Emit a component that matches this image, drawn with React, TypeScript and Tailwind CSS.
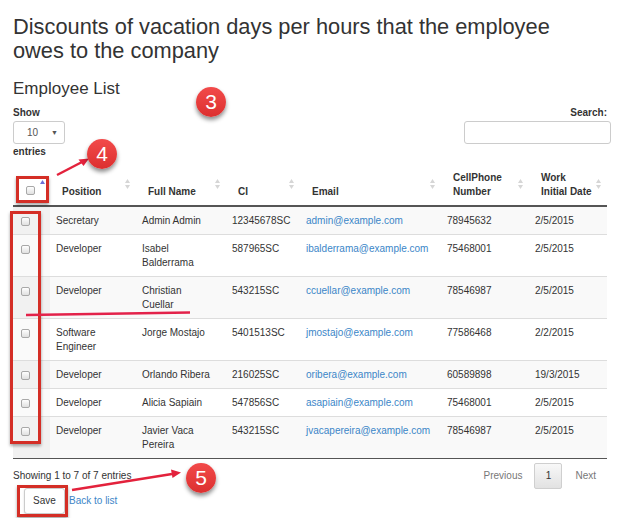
import React from 'react';

type Employee = { position: string; name: string; ci: string; email: string; phone: string; date: string };

const employees: Employee[] = [
  { position: 'Secretary', name: 'Admin Admin', ci: '12345678SC', email: 'admin@example.com', phone: '78945632', date: '2/5/2015' },
  { position: 'Developer', name: 'Isabel Balderrama', ci: '587965SC', email: 'ibalderrama@example.com', phone: '75468001', date: '2/5/2015' },
  { position: 'Developer', name: 'Christian Cuellar', ci: '543215SC', email: 'ccuellar@example.com', phone: '78546987', date: '2/5/2015' },
  { position: 'Software Engineer', name: 'Jorge Mostajo', ci: '5401513SC', email: 'jmostajo@example.com', phone: '77586468', date: '2/2/2015' },
  { position: 'Developer', name: 'Orlando Ribera', ci: '216025SC', email: 'oribera@example.com', phone: '60589898', date: '19/3/2015' },
  { position: 'Developer', name: 'Alicia Sapiain', ci: '547856SC', email: 'asapiain@example.com', phone: '75468001', date: '2/5/2015' },
  { position: 'Developer', name: 'Javier Vaca Pereira', ci: '543215SC', email: 'jvacapereira@example.com', phone: '78546987', date: '2/5/2015' },
];

const CheckBox = () => (
  <span className="block w-[9px] h-[9px] rounded-[2px] border border-[#a8a8a8] bg-linear-to-b from-white to-[#e0e0e0]" />
);

const SortBoth = () => (
  <svg width="5" height="10" viewBox="0 0 5 10" className="absolute right-[6px] top-[14px]">
    <path d="M2.5 0L5 4H0z" fill="#d6d6d6" />
    <path d="M2.5 10L0 6h5z" fill="#d6d6d6" />
  </svg>
);

const Badge = ({ n, className }: { n: number; className: string }) => (
  <div
    className={`absolute w-[30px] h-[30px] rounded-full bg-linear-to-b from-[#f24a4a] to-[#dc2f2f] text-white text-[21px] leading-[30px] text-center shadow-[0_3px_4px_rgba(0,0,0,0.45)] ${className}`}
  >
    {n}
  </div>
);

const headers = [
  { label: 'Position' },
  { label: 'Full Name' },
  { label: 'CI' },
  { label: 'Email' },
  { label: 'CellPhone Number' },
  { label: 'Work Initial Date' },
];

export default function App() {
  return (
    <div className="relative w-[624px] h-[518px] overflow-hidden bg-white text-[#333] font-['Liberation_Sans',Arial,sans-serif]">
      <div className="pl-[13px] pt-[15px] w-[607px]">
        <h2 className="text-[21.8px] leading-[24px] text-[#333]">
          Discounts of vacation days per hours that the employee
          <br />
          owes to the company
        </h2>
        <h4 className="mt-[16px] text-[17px] leading-[19px] text-[#333]">Employee List</h4>

        <div className="mt-[8px] flex justify-between items-start text-[10px] leading-[14px]">
          <div>
            <div className="font-bold">Show</div>
            <div className="mt-[1px] w-[52px] h-[23px] border border-[#ccc] rounded-[3px] flex items-center justify-between pl-[13px] pr-[6px] text-[#555]">
              <span>10</span>
              <span className="text-[7px]">▼</span>
            </div>
            <div className="mt-[1px] font-bold">entries</div>
          </div>
          <div className="flex flex-col items-end mr-[-4px]">
            <div className="font-bold mr-[4px]">Search:</div>
            <div className="mt-[1px] w-[147px] h-[23px] border border-[#ccc] rounded-[3px]" />
          </div>
        </div>

        <table className="mt-[6px] w-[594px] table-fixed border-collapse text-[10px] leading-[14px]">
          <colgroup>
            <col className="w-[37px]" />
            <col className="w-[86px]" />
            <col className="w-[90px]" />
            <col className="w-[74px]" />
            <col className="w-[141px]" />
            <col className="w-[88px]" />
            <col className="w-[78px]" />
          </colgroup>
          <thead>
            <tr className="border-b-2 border-[#555]">
              <th className="relative pl-[13px] py-[6px] text-left align-bottom">
                <div className="pb-[4px]"><CheckBox /></div>
                <svg width="5" height="4" viewBox="0 0 5 4" className="absolute left-[27px] top-[15px]">
                  <path d="M2.5 0L5 4H0z" fill="#6e6ed6" />
                </svg>
              </th>
              {headers.map((h) => (
                <th key={h.label} className="relative pl-[12px] pr-[14px] py-[6px] text-left align-bottom font-bold">
                  {h.label}
                  <SortBoth />
                </th>
              ))}
            </tr>
          </thead>
          <tbody>
            {employees.map((e, i) => {
              const striped = i % 2 === 0;
              return (
                <tr key={i} className={`border-t border-[#ddd] first:border-t-0 ${striped ? 'bg-[#f9f9f9]' : 'bg-white'}`}>
                  <td className={`pl-[8px] pt-[7px] pb-[6px] align-top ${striped ? 'bg-[#f1f1f1]' : 'bg-[#fafafa]'}`}>
                    <div className="pt-[3px]"><CheckBox /></div>
                  </td>
                  <td className="px-[6px] pt-[7px] pb-[6px] align-top">{e.position}</td>
                  <td className="pl-[6px] pr-[14px] pt-[7px] pb-[6px] align-top">{e.name}</td>
                  <td className="px-[6px] pt-[7px] pb-[6px] align-top">{e.ci}</td>
                  <td className="px-[6px] pt-[7px] pb-[6px] align-top text-[#3b86c8]">{e.email}</td>
                  <td className="px-[6px] pt-[7px] pb-[6px] align-top">{e.phone}</td>
                  <td className="px-[6px] pt-[7px] pb-[6px] align-top">{e.date}</td>
                </tr>
              );
            })}
          </tbody>
        </table>
        <div className="w-[594px] border-t border-[#555]" />

        <div className="mt-[4px] w-[594px] flex items-center justify-between text-[10px] leading-[14px]">
          <span>Showing 1 to 7 of 7 entries</span>
          <div className="flex items-center text-[#777] mr-[11px]">
            <span>Previous</span>
            <span className="ml-[12px] w-[28px] h-[26px] flex items-center justify-center border border-[#cfcfcf] rounded-[2px] bg-linear-to-b from-[#f8f8f8] to-[#e2e2e2] text-[#333]">1</span>
            <span className="ml-[13px]">Next</span>
          </div>
        </div>

        <div className="mt-[-1px] pl-[11px] flex items-center text-[10px] leading-[14px]">
          <span className="w-[41px] h-[26px] border border-[#ccc] rounded-[3px] bg-white flex items-center justify-center shadow-[0_1px_2px_rgba(0,0,0,0.15)]">Save</span>
          <span className="ml-[4px] text-[#3b86c8]">Back to list</span>
        </div>
      </div>

      {/* annotations */}
      <div className="absolute left-[16px] top-[176px] w-[33px] h-[27px] border-[3px] border-[#d42e26] shadow-[0_2px_3px_rgba(0,0,0,0.35)]" />
      <div className="absolute left-[10px] top-[211px] w-[31px] h-[233px] border-[3px] border-[#d42e26] shadow-[0_2px_3px_rgba(0,0,0,0.35)]" />
      <div className="absolute left-[17px] top-[485px] w-[51px] h-[32px] border-[3px] border-[#d42e26] shadow-[0_2px_3px_rgba(0,0,0,0.35)]" />

      <svg className="absolute inset-0 pointer-events-none" width="624" height="518" viewBox="0 0 624 518">
        <line x1="26" y1="315" x2="190" y2="312.5" stroke="#e3224a" strokeWidth="2.5" />
        <line x1="57" y1="175" x2="82" y2="162" stroke="#e3223c" strokeWidth="2.5" />
        <path d="M89 158.5L78.5 159.5L83.5 166z" fill="#e3223c" />
        <line x1="72" y1="490" x2="172" y2="474" stroke="#e3223c" strokeWidth="2.5" />
        <path d="M181 472.5L171 469.5L172.5 478z" fill="#e3223c" />
      </svg>

      <Badge n={3} className="left-[196px] top-[87px]" />
      <Badge n={4} className="left-[87px] top-[139px]" />
      <Badge n={5} className="left-[186px] top-[463px]" />
    </div>
  );
}
